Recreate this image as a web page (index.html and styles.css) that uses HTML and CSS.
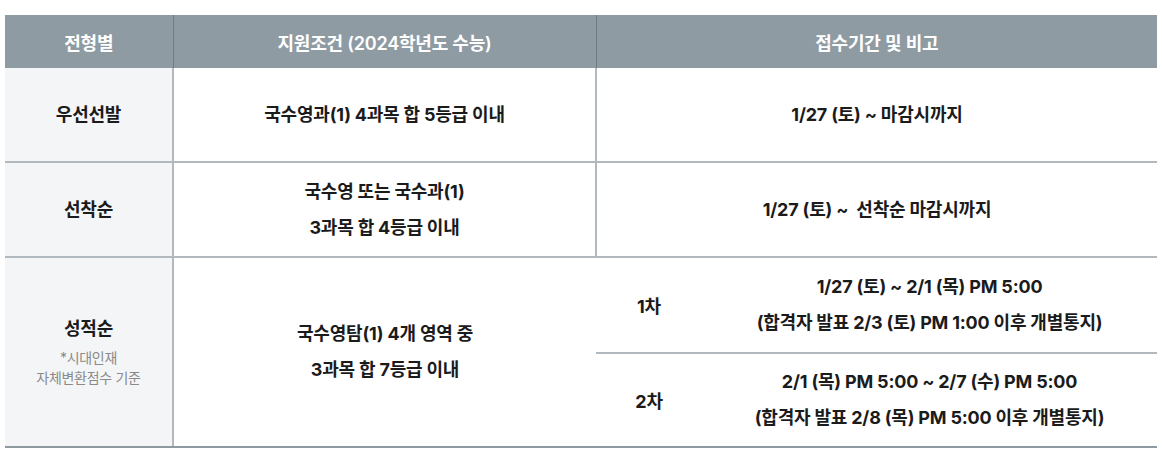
FILE: index.html
```html
<!DOCTYPE html>
<html lang="ko">
<head>
<meta charset="utf-8">
<link rel="stylesheet" href="styles.css">
</head>
<body>
<table class="admission">
  <colgroup>
    <col class="c-type">
    <col class="c-cond">
    <col class="c-round">
    <col class="c-period">
  </colgroup>
  <thead>
    <tr class="head-row">
      <th>전형별</th>
      <th>지원조건 (2024학년도 수능)</th>
      <th colspan="2">접수기간 및 비고</th>
    </tr>
  </thead>
  <tbody>
    <tr class="row-a">
      <td class="type">우선선발</td>
      <td>국수영과(1) 4과목 합 5등급 이내</td>
      <td colspan="2">1/27 (토) ~ 마감시까지</td>
    </tr>
    <tr class="row-b">
      <td class="type">선착순</td>
      <td class="multi">국수영 또는 국수과(1)<br>3과목 합 4등급 이내</td>
      <td colspan="2">1/27 (토) ~&nbsp; 선착순 마감시까지</td>
    </tr>
    <tr class="row-c">
      <td class="type" rowspan="2">
        <div class="type-main">성적순</div>
        <div class="type-note">*시대인재<br>자체변환점수 기준</div>
      </td>
      <td class="multi" rowspan="2">국수영탐(1) 4개 영역 중<br>3과목 합 7등급 이내</td>
      <td class="round">1차</td>
      <td class="multi period">1/27 (토) ~ 2/1 (목) PM 5:00<br>(합격자 발표 2/3 (토) PM 1:00 이후 개별통지)</td>
    </tr>
    <tr class="row-d">
      <td class="round">2차</td>
      <td class="multi period">2/1 (목) PM 5:00 ~ 2/7 (수) PM 5:00<br>(합격자 발표 2/8 (목) PM 5:00 이후 개별통지)</td>
    </tr>
  </tbody>
</table>
</body>
</html>
```

FILE: styles.css
```css
html, body {
  margin: 0;
  padding: 0;
  background: #ffffff;
}

body {
  padding: 15px 5px 0 5px;
  font-family: Inter, "Noto Sans CJK KR", sans-serif;
  color: #1b1b1b;
}

.admission {
  width: 1152px;
  border-collapse: collapse;
  table-layout: fixed;
}

.c-type { width: 168px; }
.c-cond { width: 423px; }
.c-round { width: 106px; }
.c-period { width: 455px; }

.admission th {
  background: #8f9ba3;
  color: #ffffff;
  font-size: 18px;
  font-weight: 600;
  letter-spacing: -0.2px;
  height: 53px;
  padding: 0;
  text-align: center;
  vertical-align: middle;
  border-left: 1px solid #6f7a81;
}

.admission th:first-child {
  border-left: none;
}

.admission td {
  font-size: 18px;
  font-weight: 700;
  letter-spacing: -0.2px;
  text-align: center;
  vertical-align: middle;
  padding: 0;
  border-top: 2px solid #b1b9be;
  border-left: 2px solid #b1b9be;
  line-height: 24px;
}

.admission td.type {
  border-left: none;
  background: #f4f5f7;
}

.admission tbody tr:first-child td {
  border-top: none;
}

.admission td.round {
  padding-top: 4px;
}

.admission td.round,
.admission td.period {
  border-left: none;
}

.admission tr.row-c td.round,
.admission tr.row-c td.period {
  border-top: 2px solid #b1b9be;
}

.admission td.multi {
  line-height: 36px;
}

.row-a td { height: 93px; }
.row-b td { height: 93px; }
.row-c td.round, .row-c td.period { height: 90px; }
.row-d td { height: 88px; }

.admission tbody tr:last-child td,
.admission td[rowspan] {
  border-bottom: 2px solid #8e99a0;
}

.type-main {
  font-size: 18px;
  font-weight: 700;
  line-height: 24px;
}

.type-note {
  font-size: 14px;
  font-weight: 400;
  letter-spacing: -0.3px;
  color: #8a8a8a;
  line-height: 20px;
  margin-top: 7px;
}
```
